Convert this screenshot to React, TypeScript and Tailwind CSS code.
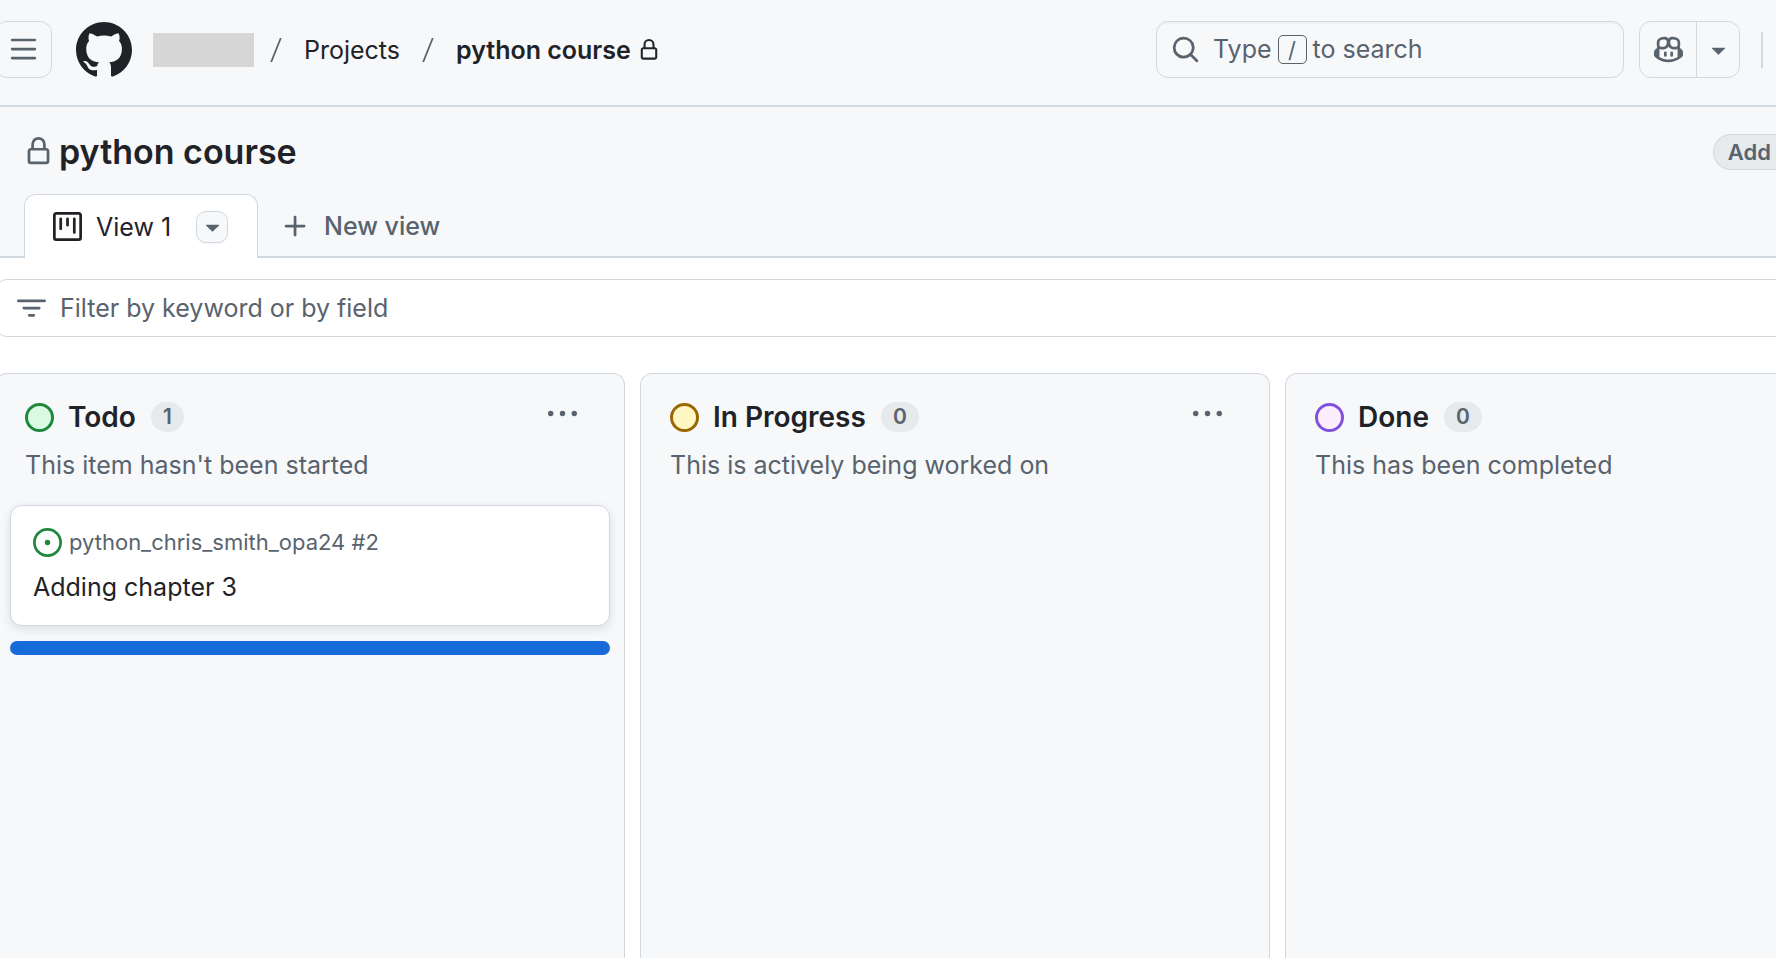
import React from "react";

type IconProps = { d: string; className?: string };

function Icon({ d, className = "size-[29px]" }: IconProps) {
  return (
    <svg viewBox="0 0 16 16" fill="currentColor" aria-hidden="true" className={`shrink-0 ${className}`}>
      <path d={d} />
    </svg>
  );
}

const paths = {
  bars: "M1 2.75A.75.75 0 0 1 1.75 2h12.5a.75.75 0 0 1 0 1.5H1.75A.75.75 0 0 1 1 2.75Zm0 5A.75.75 0 0 1 1.75 7h12.5a.75.75 0 0 1 0 1.5H1.75A.75.75 0 0 1 1 7.75ZM1.75 12h12.5a.75.75 0 0 1 0 1.5H1.75a.75.75 0 0 1 0-1.5Z",
  lock: "M4 4a4 4 0 0 1 8 0v2h.25c.966 0 1.75.784 1.75 1.75v5.5A1.75 1.75 0 0 1 12.25 15h-8.5A1.75 1.75 0 0 1 2 13.25v-5.5C2 6.784 2.784 6 3.75 6H4Zm8.25 3.5h-8.5a.25.25 0 0 0-.25.25v5.5c0 .138.112.25.25.25h8.5a.25.25 0 0 0 .25-.25v-5.5a.25.25 0 0 0-.25-.25ZM10.5 6V4a2.5 2.5 0 1 0-5 0v2Z",
  project:
    "M1.75 0h12.5C15.216 0 16 .784 16 1.75v12.5A1.75 1.75 0 0 1 14.25 16H1.75A1.75 1.75 0 0 1 0 14.25V1.75C0 .784.784 0 1.75 0ZM1.5 1.75v12.5c0 .138.112.25.25.25h12.5a.25.25 0 0 0 .25-.25V1.75a.25.25 0 0 0-.25-.25H1.75a.25.25 0 0 0-.25.25ZM11.75 3a.75.75 0 0 1 .75.75v7.5a.75.75 0 0 1-1.5 0v-7.5a.75.75 0 0 1 .75-.75Zm-8.25.75a.75.75 0 0 1 1.5 0v5.5a.75.75 0 0 1-1.5 0ZM8 3a.75.75 0 0 1 .75.75v3.5a.75.75 0 0 1-1.5 0v-3.5A.75.75 0 0 1 8 3Z",
  search:
    "M10.68 11.74a6 6 0 0 1-7.922-8.982 6 6 0 0 1 8.982 7.922l3.04 3.04a.749.749 0 0 1-.326 1.275.749.749 0 0 1-.734-.215ZM11.5 7a4.499 4.499 0 1 0-8.997 0A4.499 4.499 0 0 0 11.5 7Z",
  triangle:
    "m4.427 7.427 3.396 3.396a.25.25 0 0 0 .354 0l3.396-3.396A.25.25 0 0 0 11.396 7H4.604a.25.25 0 0 0-.177.427Z",
  copilot:
    "M7.998 15.035c-4.562 0-7.873-2.914-7.998-3.749V9.338c.085-.628.677-1.686 1.588-2.065.013-.07.024-.143.036-.218.029-.183.06-.384.126-.612-.201-.508-.254-1.084-.254-1.656 0-.87.128-1.769.693-2.484.579-.733 1.494-1.124 2.724-1.261 1.206-.134 2.262.034 2.944.765.05.053.096.108.139.165.044-.057.094-.112.143-.165.682-.731 1.738-.899 2.944-.765 1.23.137 2.145.528 2.724 1.261.566.715.693 1.614.693 2.484 0 .572-.053 1.148-.254 1.656.066.228.098.429.126.612.012.076.024.148.037.218.924.385 1.522 1.471 1.591 2.095v1.872c0 .766-3.351 3.795-8.002 3.795Zm0-1.485c2.28 0 4.584-1.11 5.002-1.433V7.862l-.023-.116c-.49.21-1.075.291-1.727.291-1.146 0-2.059-.327-2.71-.991A3.222 3.222 0 0 1 8 6.303a3.24 3.24 0 0 1-.544.743c-.65.664-1.563.991-2.71.991-.652 0-1.236-.081-1.727-.291l-.023.116v4.255c.419.323 2.722 1.433 5.002 1.433ZM6.762 2.83c-.193-.206-.637-.413-1.682-.297-1.019.113-1.479.404-1.713.7-.247.312-.369.789-.369 1.554 0 .793.129 1.171.308 1.371.162.181.519.379 1.442.379.853 0 1.339-.235 1.638-.54.315-.322.527-.827.617-1.553.117-.935-.037-1.395-.241-1.614Zm4.155-.297c-1.044-.116-1.488.091-1.681.297-.204.219-.359.679-.242 1.614.091.726.303 1.231.618 1.553.299.305.784.54 1.638.54.922 0 1.28-.198 1.442-.379.179-.2.308-.578.308-1.371 0-.765-.123-1.242-.37-1.554-.233-.296-.693-.587-1.713-.7ZM6.25 9.037a.75.75 0 0 1 .75.75v1.501a.75.75 0 0 1-1.5 0V9.787a.75.75 0 0 1 .75-.75Zm4.25.75v1.501a.75.75 0 0 1-1.5 0V9.787a.75.75 0 0 1 1.5 0Z",
  filter:
    "M.75 3h14.5a.75.75 0 0 1 0 1.5H.75a.75.75 0 0 1 0-1.5ZM3 7.75A.75.75 0 0 1 3.75 7h8.5a.75.75 0 0 1 0 1.5h-8.5A.75.75 0 0 1 3 7.75Zm3 4a.75.75 0 0 1 .75-.75h2.5a.75.75 0 0 1 0 1.5h-2.5a.75.75 0 0 1-.75-.75Z",
  issue:
    "M8 9.5a1.5 1.5 0 1 0 0-3 1.5 1.5 0 0 0 0 3ZM8 0a8 8 0 1 1 0 16A8 8 0 0 1 8 0ZM1.5 8a6.5 6.5 0 1 0 13 0 6.5 6.5 0 0 0-13 0Z",
  kebab:
    "M8 9.5a1.5 1.5 0 1 0 0-3 1.5 1.5 0 0 0 0 3ZM1.5 9.5a1.5 1.5 0 1 0 0-3 1.5 1.5 0 0 0 0 3ZM14.5 9.5a1.5 1.5 0 1 0 0-3 1.5 1.5 0 0 0 0 3Z",
  plus: "M7.75 2a.75.75 0 0 1 .75.75V7h4.25a.75.75 0 0 1 0 1.5H8.5v4.25a.75.75 0 0 1-1.5 0V8.5H2.75a.75.75 0 0 1 0-1.5H7V2.75A.75.75 0 0 1 7.75 2Z",
};

function GitHubMark() {
  return (
    <svg viewBox="1 .75 23 23" fill="currentColor" aria-hidden="true" className="size-14">
      <path d="M12.5.75C6.146.75 1 5.896 1 12.25c0 5.089 3.292 9.387 7.863 10.91.575.101.79-.244.79-.546 0-.273-.014-1.178-.014-2.142-2.889.532-3.636-.704-3.866-1.35-.13-.331-.69-1.352-1.18-1.625-.402-.216-.977-.748-.014-.762.906-.014 1.553.834 1.769 1.179 1.035 1.74 2.688 1.25 3.349.948.1-.747.402-1.25.733-1.538-2.559-.287-5.232-1.279-5.232-5.678 0-1.25.445-2.285 1.178-3.09-.115-.288-.517-1.467.115-3.048 0 0 .963-.302 3.163 1.179.92-.259 1.897-.388 2.875-.388.977 0 1.955.13 2.875.388 2.2-1.495 3.162-1.179 3.162-1.179.633 1.581.23 2.76.115 3.048.733.805 1.179 1.825 1.179 3.09 0 4.413-2.688 5.39-5.247 5.678.417.36.776 1.05.776 2.128 0 1.538-.014 2.774-.014 3.162 0 .302.216.662.79.547C20.709 21.637 24 17.324 24 12.25 24 5.896 18.854.75 12.5.75Z" />
    </svg>
  );
}

function Slash() {
  return (
    <svg viewBox="0 0 12 26" aria-hidden="true" className="h-[26px] w-3 shrink-0 text-[#59636e]">
      <path d="M1.2 25 10.8 1" stroke="currentColor" strokeWidth="1.8" fill="none" />
    </svg>
  );
}

function Header() {
  return (
    <header className="flex h-[107px] shrink-0 items-center border-b-2 border-[#d1d9e0] bg-[#f6f8fa] pb-[6px] pr-[13px]">
      <button
        type="button"
        aria-label="Open menu"
        className="-ml-[5px] flex h-[57px] w-[57px] shrink-0 items-center justify-center rounded-xl border border-[#d1d9e0] pr-[1px] text-[#59636e]"
      >
        <Icon d={paths.bars} />
      </button>
      <a href="#" aria-label="Homepage" className="ml-6 shrink-0">
        <GitHubMark />
      </a>
      <nav aria-label="Breadcrumb" className="ml-[21px] flex min-w-0 items-center text-[25px] leading-9 whitespace-nowrap">
        <a href="#" aria-label="Owner" className="mr-4 block h-[34px] w-[101px] bg-[#d6d6d6]" />
        <Slash />
        <a href="#" className="mx-[22px]">
          Projects
        </a>
        <Slash />
        <a href="#" className="ml-[22px] font-semibold">
          python course
        </a>
        <Icon d={paths.lock} className="ml-[7px] size-[22px]" />
      </nav>
      <button
        type="button"
        className="ml-auto flex h-[57px] w-[468px] min-w-0 items-center rounded-xl border border-[#d1d9e0] pl-[14px] text-[25px] whitespace-nowrap text-[#59636e] shadow-[inset_0_2px_0_rgba(31,35,40,0.03)]"
      >
        <Icon d={paths.search} />
        <span className="ml-[13px]">Type</span>
        <kbd className="mx-[6px] flex size-[29px] items-center justify-center rounded-[5px] border border-[#59636e] font-[Inter] text-[22px] leading-none">
          /
        </kbd>
        <span>to search</span>
      </button>
      <div className="ml-[15px] flex h-[57px] shrink-0 rounded-xl border border-[#d1d9e0] text-[#59636e]">
        <button type="button" aria-label="Chat with Copilot" className="flex w-14 items-center justify-center">
          <Icon d={paths.copilot} />
        </button>
        <button
          type="button"
          aria-label="Copilot options"
          className="flex w-[43px] items-center justify-center border-l border-[#d1d9e0]"
        >
          <Icon d={paths.triangle} />
        </button>
      </div>
      <div className="ml-[21px] h-9 w-[2px] shrink-0 bg-[#d1d9e0]" />
    </header>
  );
}

function ProjectHeader() {
  return (
    <div className="shrink-0 bg-[#f6f8fa]">
      <div className="flex h-[87px] items-center pt-[2px] pl-6">
        <span className="text-[#59636e]">
          <Icon d={paths.lock} />
        </span>
        <h1 className="ml-[6px] text-[34px] leading-[44px] font-semibold">python course</h1>
        <button
          type="button"
          className="-mr-[15px] ml-auto h-9 rounded-l-full border border-r-0 border-[#d1d9e0] bg-[#e6eaed] pr-5 pl-[14px] text-[22px] leading-none font-semibold text-[#59636e]"
        >
          Add
        </button>
      </div>
      <div className="flex h-16 border-b-2 border-[#d1d9e0] pl-6">
        <div className="-mb-[2px] flex w-[234px] items-center rounded-t-xl border border-b-0 border-[#d1d9e0] bg-white pl-7">
          <a href="#" className="flex items-center gap-[14px] text-[25px] leading-9">
            <Icon d={paths.project} />
            View 1
          </a>
          <button
            type="button"
            aria-label="View options"
            className="mr-[29px] ml-auto flex size-8 items-center justify-center rounded-[10px] border border-[#d1d9e0] bg-[#f6f8fa] text-[#59636e] shadow-[0_1px_1px_rgba(31,35,40,0.04)]"
          >
            <Icon d={paths.triangle} />
          </button>
        </div>
        <button
          type="button"
          className="ml-[23px] flex items-center gap-[14px] pt-[2px] text-[25px] leading-9 font-medium text-[#59636e]"
        >
          <Icon d={paths.plus} />
          New view
        </button>
      </div>
    </div>
  );
}

type Column = { title: string; count: number; description: string; dot: string };

const columns: Column[] = [
  {
    title: "Todo",
    count: 1,
    description: "This item hasn't been started",
    dot: "border-[#1f883d] bg-[#dafbe1]",
  },
  {
    title: "In Progress",
    count: 0,
    description: "This is actively being worked on",
    dot: "border-[#9a6700] bg-[#fff8c5]",
  },
  {
    title: "Done",
    count: 0,
    description: "This has been completed",
    dot: "border-[#8250df] bg-[#fbefff]",
  },
];

function BoardColumn({ column, children }: { column: Column; children?: React.ReactNode }) {
  return (
    <section className="flex w-[630px] shrink-0 flex-col rounded-t-xl border border-b-0 border-[#d1d9e0] bg-[#f6f8fa]">
      <div className="px-[29px] pt-[23px]">
        <div className="flex h-10 items-center">
          <span className={`size-[29px] shrink-0 rounded-full border-[3px] ${column.dot}`} />
          <h2 className="ml-[14px] text-[28px] leading-10 font-semibold">{column.title}</h2>
          <span className="ml-[15px] rounded-full bg-[#e6eaed] px-3 text-[21px] leading-[30px] font-semibold text-[#59636e]">
            {column.count}
          </span>
          <button type="button" aria-label={`Actions for ${column.title}`} className="mr-[18px] mb-2 ml-auto text-[#59636e]">
            <Icon d={paths.kebab} />
          </button>
        </div>
        <p className="mt-[10px] text-[25px] leading-9 text-[#59636e]">{column.description}</p>
      </div>
      {children}
    </section>
  );
}

function TodoCards() {
  return (
    <div className="mt-[22px] px-[14px]">
      <article className="rounded-xl border border-[#d1d9e0] bg-white px-[22px] pt-[19px] pb-5 shadow-[0_3px_10px_rgba(31,35,40,0.12)]">
        <div className="flex items-center gap-[7px] text-[22px] leading-[34px] text-[#59636e]">
          <span className="text-[#1f883d]">
            <Icon d={paths.issue} />
          </span>
          python_chris_smith_opa24 #2
        </div>
        <a href="#" className="mt-[10px] block text-[25px] leading-9">
          Adding chapter 3
        </a>
      </article>
      <div className="mt-[15px] h-[14px] rounded-full bg-[#166bd8]" />
    </div>
  );
}

export default function App() {
  return (
    <div className="flex min-h-screen flex-col overflow-hidden bg-white font-[Inter,sans-serif] text-[#1f2328]">
      <Header />
      <ProjectHeader />
      <main className="-ml-[5px] flex flex-1 flex-col">
        <label className="mt-[21px] -mr-5 flex h-[58px] shrink-0 items-center rounded-xl border border-[#d1d9e0] pl-[21px] text-[#59636e]">
          <Icon d={paths.filter} />
          <input
            type="text"
            aria-label="Filter by keyword or by field"
            placeholder="Filter by keyword or by field"
            className="ml-[14px] h-full min-w-0 flex-1 bg-transparent text-[25px] text-[#1f2328] outline-none placeholder:text-[#59636e]"
          />
        </label>
        <div className="mt-9 flex flex-1 gap-[15px]">
          {columns.map((column) => (
            <BoardColumn key={column.title} column={column}>
              {column.title === "Todo" && <TodoCards />}
            </BoardColumn>
          ))}
        </div>
      </main>
    </div>
  );
}
